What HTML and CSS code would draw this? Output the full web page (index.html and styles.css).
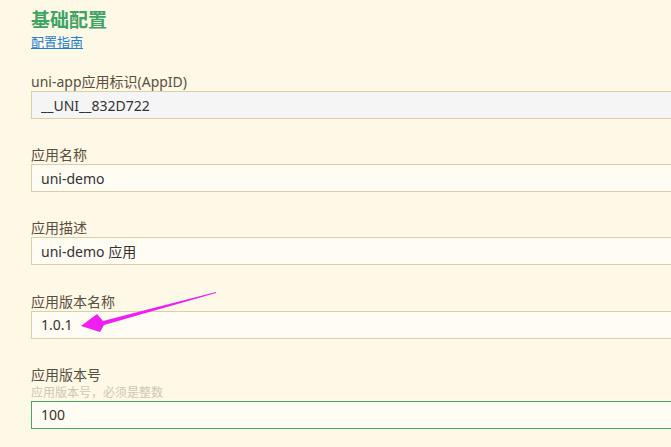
FILE: index.html
```html
<!DOCTYPE html>
<html lang="zh-CN">

  <head>
    <meta charset="UTF-8">
    <meta name="viewport" content="width=device-width, initial-scale=1.0">
    <title>基础配置</title>
    <link rel="stylesheet" href="styles.css">
  </head>

  <body>
    <div class="page">
      <h1 class="title">基础配置</h1>
      <a class="guide-link" href="#">配置指南</a>

      <div class="form">
        <div class="field">
          <label class="field-label">uni-app应用标识(AppID)</label>
          <input class="field-input readonly" type="text" value="__UNI__832D722" readonly>
        </div>
        <div class="field">
          <label class="field-label">应用名称</label>
          <input class="field-input" type="text" value="uni-demo">
        </div>
        <div class="field">
          <label class="field-label">应用描述</label>
          <input class="field-input" type="text" value="uni-demo 应用">
        </div>
        <div class="field">
          <label class="field-label">应用版本名称</label>
          <input class="field-input" type="text" value="1.0.1">
        </div>
        <div class="field">
          <label class="field-label">应用版本号</label>
          <p class="field-hint">应用版本号，必须是整数</p>
          <input class="field-input focused" type="text" value="100">
        </div>
      </div>
    </div>

    <!-- annotation arrow drawn over the form -->
    <svg class="note-arrow" width="671" height="447" viewBox="0 0 671 447">
      <polygon points="216,292 103,321 97,314 81,326 100,332 104,325 216,293" fill="#f01ef0"/>
    </svg>
  </body>

</html>
```

FILE: styles.css
```css
html, body {
  margin: 0;
  overflow: hidden;
}

body {
  background-color: #fef8e6;
  color: #333;
  font-family: 'Noto Sans', 'Noto Sans CJK SC', sans-serif;
}

.page {
  padding: 7px 0 0 31px;
}

.title {
  margin: 0;
  font-size: 19px;
  line-height: 26px;
  font-weight: bold;
  color: #3da464;
}

.guide-link {
  display: block;
  width: max-content;
  font-size: 13px;
  line-height: 18px;
  color: #1e7fd8;
  text-decoration: underline;
}

.form {
  margin-top: 22px;
}

.field {
  margin-bottom: 27.2px;
}

.field-label {
  display: block;
  font-size: 14px;
  line-height: 18px;
  color: #5a4f3f;
}

.field-hint {
  margin: 0;
  font-size: 12px;
  line-height: 17px;
  color: #cfc6b2;
}

/* inputs run out to the window edge, so no right border is visible */
.field-input {
  display: block;
  box-sizing: border-box;
  width: 100%;
  height: 28px;
  padding: 0 9px;
  border: 1px solid #dccfa8;
  border-right: none;
  background-color: #fffcf3;
  color: #333;
  font-family: 'Noto Sans', 'Noto Sans CJK SC', sans-serif;
  font-size: 14px;
  outline: none;
}

.field-input.readonly {
  background-color: #f5f5f5;
}

.field-input.focused {
  border-color: #46a862;
}

.note-arrow {
  position: absolute;
  top: 0;
  left: 0;
  pointer-events: none;
}
```
